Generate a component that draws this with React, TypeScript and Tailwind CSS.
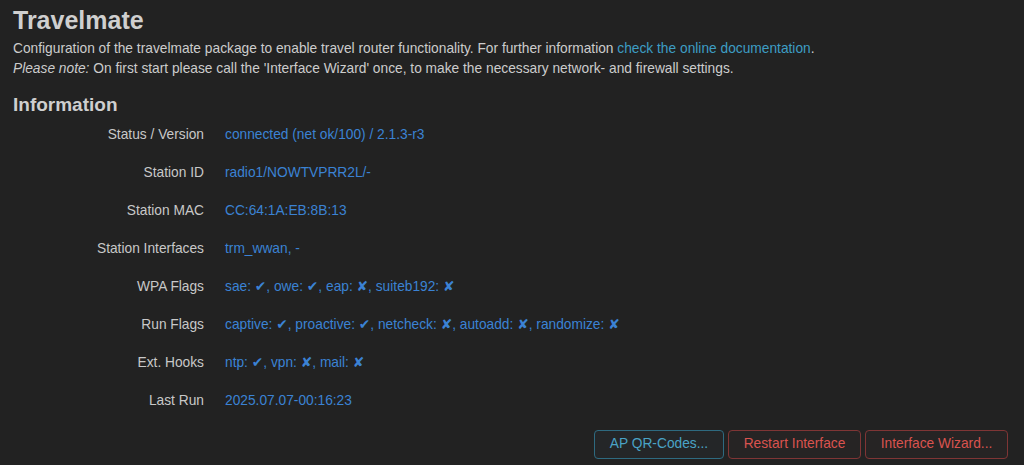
const rows: { label: string; value: string }[] = [
  { label: 'Status / Version', value: 'connected (net ok/100) / 2.1.3-r3' },
  { label: 'Station ID', value: 'radio1/NOWTVPRR2L/-' },
  { label: 'Station MAC', value: 'CC:64:1A:EB:8B:13' },
  { label: 'Station Interfaces', value: 'trm_wwan, -' },
  { label: 'WPA Flags', value: 'sae: ✔, owe: ✔, eap: ✘, suiteb192: ✘' },
  { label: 'Run Flags', value: 'captive: ✔, proactive: ✔, netcheck: ✘, autoadd: ✘, randomize: ✘' },
  { label: 'Ext. Hooks', value: 'ntp: ✔, vpn: ✘, mail: ✘' },
  { label: 'Last Run', value: '2025.07.07-00:16:23' },
]

const App = () => {
  return (
    <div
      className="min-h-[465px] w-full bg-[#222222] px-[13px] pt-[4px] text-[#cccccc]"
      style={{ fontFamily: '"Liberation Sans", Arial, "DejaVu Sans", sans-serif' }}
    >
      <h1 className="text-[25px] font-bold leading-[32px] text-[#cfcfcf]">Travelmate</h1>
      <p className="mt-[3px] text-[13.75px] leading-[20px]">
        Configuration of the travelmate package to enable travel router functionality. For further
        information{' '}
        <a className="text-[#3d9dc4]" href="#">
          check the online documentation
        </a>
        .
        <br />
        <em>Please note:</em> On first start please call the 'Interface Wizard' once, to make the
        necessary network- and firewall settings.
      </p>

      <h2 className="mt-[14px] text-[19px] font-bold leading-[24px] text-[#cfcfcf]">Information</h2>

      <div className="mt-[-1px] flex flex-col">
        {rows.map((row) => (
          <div key={row.label} className="flex h-[38px] items-center text-[13.75px]">
            <div className="w-[191px] text-right text-[#c8c8c8]">{row.label}</div>
            <div className="ml-[21px] text-[#3b82d4]">{row.value}</div>
          </div>
        ))}
      </div>

      <div className="mt-[10px] flex justify-end gap-[4px] pr-[3px] text-[13.75px]">
        <button className="h-[29px] w-[130px] rounded-[4px] border border-[#2e6a80] bg-[#242628] text-[#4aa3c6]">
          AP QR-Codes...
        </button>
        <button className="h-[29px] w-[133px] rounded-[4px] border border-[#7f3535] bg-[#262424] text-[#d9534f]">
          Restart Interface
        </button>
        <button className="h-[29px] w-[143px] rounded-[4px] border border-[#7f3535] bg-[#262424] text-[#d9534f]">
          Interface Wizard...
        </button>
      </div>
    </div>
  )
}

export default App
